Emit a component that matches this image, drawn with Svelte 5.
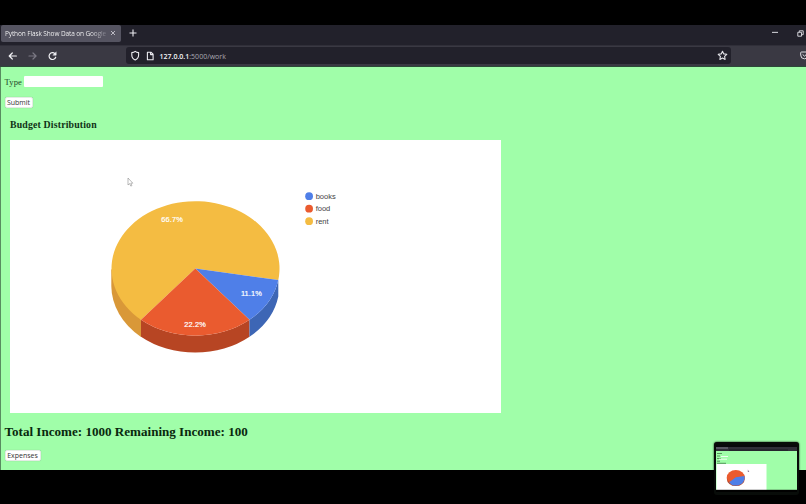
<script>
  const legend = [
    { name: 'books', color: '#4f7fe8' },
    { name: 'food', color: '#ea5b2f' },
    { name: 'rent', color: '#f4bc42' }
  ];
</script>

<div class="screen">
  <div class="tabs">
    <div class="tab"><span class="title">Python Flask Show Data on Google</span>
      <svg width="6" height="6" viewBox="0 0 6 6"><path d="M1 1l4 4M5 1l-4 4" stroke="#d4d3da" stroke-width=".8" /></svg>
    </div>
    <svg class="plus" width="8" height="8" viewBox="0 0 8 8"><path d="M4 .5v7M.5 4h7" stroke="#ececf1" stroke-width="1.1" /></svg>
    <svg class="min" width="6" height="8" viewBox="0 0 6 8"><path d="M0 3.4h6" stroke="#c8c8ce" stroke-width="1.1" /></svg>
    <svg class="restore" width="7" height="7" viewBox="0 0 7 7" fill="none" stroke="#d0d0d6"><path d="M.8 2.3h3.7v3.9H.8z" /><path d="M2.3 2V.8h3.9v3.9H5" /></svg>
  </div>
  <div class="toolbar">
    <svg class="nav" width="50" height="12" viewBox="0 0 50 12" fill="none" stroke="#f1f1f5" stroke-width="1.2" stroke-linecap="round" stroke-linejoin="round">
      <path d="M4.3 3L1.2 6l3.1 3M1.4 6h7" />
      <path stroke="#7b7984" d="M25 3l3.1 3-3.1 3M21 6h7" />
      <path d="M46.9 3.7a3.4 3.4 0 1 0 .8 3.5" /><path d="M48.2 2.2v3h-3z" fill="#f1f1f5" stroke-width=".5" />
    </svg>
    <div class="url">
      <svg width="23" height="12" viewBox="0 0 23 12" fill="none" stroke="#ededf2" stroke-width="1.1" stroke-linejoin="round">
        <path d="M4.2 1.4c1 .8 2.2 1.1 3.4 1.2v2.3c0 2.3-1.4 4.1-3.4 5.1C2.2 9 .8 7.2.8 4.9V2.6c1.2-.1 2.4-.4 3.4-1.2z" />
        <path d="M16.4 2.2h3.5l2.2 2v5.6h-5.7zM19.6 2.2v2.4h2.5" />
      </svg>
      <span class="address"><b>127.0.0.1</b>:5000/work</span>
      <svg class="star" width="11" height="11" viewBox="0 0 11 11"><path d="M5.5 1.2l1.3 2.7 3 .4-2.2 2.1.5 3-2.6-1.4-2.6 1.4.5-3-2.2-2.1 3-.4z" fill="none" stroke="#e3e3e8" stroke-width="1.1" stroke-linejoin="round" /></svg>
    </div>
    <svg class="pocket" width="6" height="9" viewBox="0 0 6 9" fill="none" stroke="#dedee4"><path d="M1.5 1h6q.8 0 .8.8V4a3.8 3.8 0 0 1-7.6 0V1.8Q.7 1 1.5 1z" /><path d="M2.6 3.4l1.9 1.8 1.9-1.8" /></svg>
  </div>

  <main>
    <div class="field"><label for="type">Type</label><input id="type" /></div>
    <button class="submit">Submit</button>
    <h3>Budget Distribution</h3>
    <section class="chart">
      <svg width="490" height="273" viewBox="10 140 490 273">
        <path d="M111.3 268.8v17A84 67.3 0 0 0 141 336.9V319.8z" fill="#d99838" />
        <path d="M141 319.8A84 67.3 0 0 0 249.5 319.8V336.7A84 67.3 0 0 1 141 336.7z" fill="#b74523" />
        <path d="M249.5 319.8A84 67.3 0 0 0 278.3 280V296.5A84 67.3 0 0 1 249.5 336.7z" fill="#3d66b5" />
        <path d="M195.3 268.5L278.3 280A84 67.3 0 1 0 141 319.8z" fill="#f4bc42" />
        <path d="M195.3 268.5L278.3 280A84 67.3 0 0 1 249.5 319.8z" fill="#4f7fe8" />
        <path d="M195.3 268.5L249.5 319.8A84 67.3 0 0 1 141 319.8z" fill="#ea5b2f" />
        <g class="percent">
          <text x="172" y="221.6" textLength="21.5">66.7%</text>
          <text x="251.4" y="296.3" textLength="21">11.1%</text>
          <text x="195" y="326.6" textLength="21.5">22.2%</text>
        </g>
        {#each legend as item, i}
          <circle cx="309.1" cy={196.2 + i * 12.5} r="3.9" fill={item.color} />
          <text class="name" x="315.7" y={198.8 + i * 12.5}>{item.name}</text>
        {/each}
        <path d="M128 178v7l1.6-1.4 1.2 2.5 1.1-.5-1.1-2.4h2z" fill="#fff" stroke="#8c8c8c" stroke-width=".6" />
      </svg>
    </section>
    <h2>Total Income: 1000 Remaining Income: 100</h2>
    <button class="expenses">Expenses</button>
  </main>

  <div class="preview">
    <svg width="81" height="47" viewBox="0 0 81 47">
      <rect width="81" height="47" fill="#a0fea9" />
      <rect width="81" height="2" fill="#08080b" /><rect y="2" width="81" height="4" fill="#302f38" />
      <rect y="2" width="12" height="2" fill="#575661" /><rect x="13" y="4.3" width="59" height="1.4" fill="#22212a" />
      <path d="M1 8.5h5M1 11h3M1 13.5h4M1 16.2h3M1 18.3h9" stroke="#437c48" stroke-width=".8" />
      <path d="M5 11.5h7M3 14.2h8" stroke="#effff0" stroke-width="1" />
      <rect x=".5" y="19" width="50" height="26" fill="#fff" />
      <ellipse cx="19.8" cy="33.7" rx="9" ry="7.4" fill="#b74523" />
      <ellipse cx="19.8" cy="32.3" rx="9" ry="7.3" fill="#ea5b2f" />
      <path d="M19.8 32.3l8.7-1.3c1 5-3 9.6-8.7 9.6-3.5 0-5.4-1.4-6.6-3.4z" fill="#4f7fe8" />
      <path d="M31.8 24.5v2.5h1.5z" fill="#8a718d" />
      <rect y="44.8" width="81" height="2.2" fill="#000" />
    </svg>
  </div>
</div>

<style>
  :global(body) { background: #000; overflow: hidden; }
  .screen { width: 806px; height: 504px; padding-top: 25px; box-sizing: border-box; background: #000; font-family: "Open Sans", "Noto Sans", sans-serif; }
  svg { display: block; flex: none; }
  .tabs { height: 20px; display: flex; align-items: center; background: #22212b; box-sizing: border-box; padding-bottom: 4px; }
  .tab { width: 120px; height: 17px; margin: 0 8px 0 1px; padding: 0 5px 0 4px; box-sizing: border-box; display: flex; align-items: center; justify-content: space-between; background: #555461; border-radius: 2px; }
  .title { white-space: nowrap; color: transparent; background: linear-gradient(90deg, #fff 84%, #777682); -webkit-background-clip: text; background-clip: text; font-size: 6.5px; letter-spacing: -.12px; }
  .min { margin-left: auto; margin-right: 18.5px; }
  .restore { margin-right: 2.5px; }
  .toolbar { height: 22px; display: flex; align-items: center; background: #3a3943; border-bottom: 1px solid #2c4938; box-sizing: border-box; padding-left: 8px; box-shadow: inset 0 1px #302f39; }
  .nav { margin-right: 68px; }
  .url { flex: none; width: 605px; height: 17px; display: flex; align-items: center; background: #22212b; border-radius: 3px; box-sizing: border-box; padding: 0 3px 0 5px; }
  .address { margin-left: 5.5px; padding-top: 1px; font-size: 7px; color: #aaa9b3; white-space: nowrap; }
  .address b { font-weight: 600; color: #f6f6f8; }
  .star { margin-left: auto; }
  .pocket { margin-left: 69px; }
  main { height: 403px; background: #a0fea9; border-left: 1px solid #588c60; box-sizing: border-box; padding: 9px 0 0 3.5px; display: flex; flex-direction: column; align-items: flex-start; }
  .field { height: 11px; display: flex; align-items: center; font: 8.5px "Liberation Serif", serif; color: #244729; }
  label { width: 19.4px; letter-spacing: .15px; }
  input { width: 79px; height: 11px; border: 0; padding: 0; border-radius: 1px; background: #fff; }
  button { border: 1px solid #e4ece5; border-radius: 2px; padding: 0; background: #fff; color: #333; font: 7px/8px "Open Sans", sans-serif; box-sizing: border-box; box-shadow: 0 0 1px #81bb87; }
  .submit { width: 28px; height: 11px; margin-top: 10px; }
  h3 { margin: 11px 0 0 5.5px; height: 12px; font: bold 9.8px/12px "Liberation Serif", serif; letter-spacing: .17px; color: #103216; }
  .chart { width: 490.5px; height: 273px; margin: 9px 0 0 5.5px; background: #fff; }
  .percent text { font: 7.4px "Liberation Sans", Arial, sans-serif; fill: #fff; stroke: #fff; stroke-width: .2px; text-anchor: middle; }
  .name { font: 7.5px "Liberation Sans", Arial, sans-serif; fill: #444; }
  h2 { margin: 11px 0 0; height: 15px; font: bold 13.08px/15px "Liberation Serif", serif; color: #09290e; white-space: nowrap; }
  .expenses { width: 36px; height: 11px; margin-top: 11px; }
  .preview { position: absolute; left: 714px; top: 442px; width: 85px; height: 53px; padding: 3px 2px; box-sizing: border-box; background: #080c09; border-radius: 3px; box-shadow: 0 0 2px #000; }
</style>
